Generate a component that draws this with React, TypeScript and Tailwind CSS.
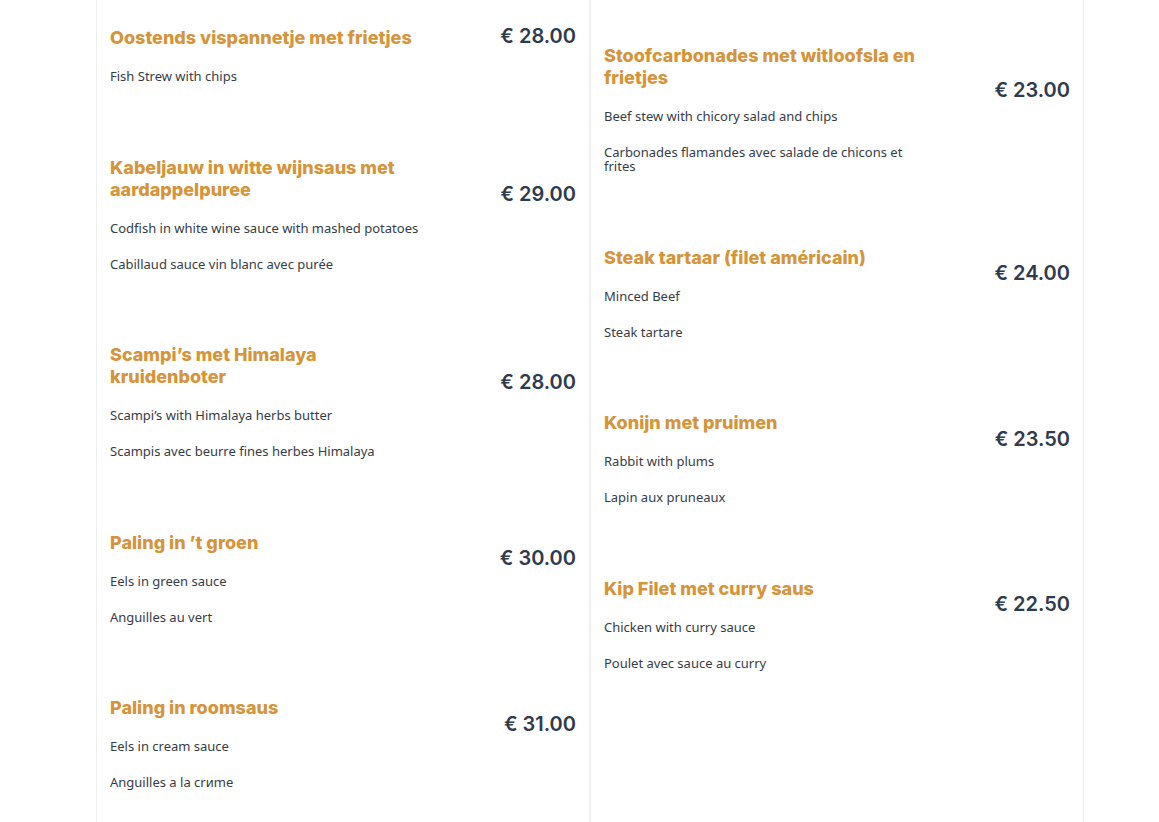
import React from 'react'

type Dish = { name: string; en: string; fr?: string; price: string }

const leftDishes: Dish[] = [
  { name: 'Oostends vispannetje met frietjes', en: 'Fish Strew with chips', price: '€ 28.00' },
  {
    name: 'Kabeljauw in witte wijnsaus met aardappelpuree',
    en: 'Codfish in white wine sauce with mashed potatoes',
    fr: 'Cabillaud sauce vin blanc avec purée',
    price: '€ 29.00',
  },
  {
    name: 'Scampi’s met Himalaya kruidenboter',
    en: 'Scampi’s with Himalaya herbs butter',
    fr: 'Scampis avec beurre fines herbes Himalaya',
    price: '€ 28.00',
  },
  { name: 'Paling in ’t groen', en: 'Eels in green sauce', fr: 'Anguilles au vert', price: '€ 30.00' },
  { name: 'Paling in roomsaus', en: 'Eels in cream sauce', fr: 'Anguilles a la crиme', price: '€ 31.00' },
]

const rightDishes: Dish[] = [
  {
    name: 'Stoofcarbonades met witloofsla en frietjes',
    en: 'Beef stew with chicory salad and chips',
    fr: 'Carbonades flamandes avec salade de chicons et frites',
    price: '€ 23.00',
  },
  { name: 'Steak tartaar (filet américain)', en: 'Minced Beef', fr: 'Steak tartare', price: '€ 24.00' },
  { name: 'Konijn met pruimen', en: 'Rabbit with plums', fr: 'Lapin aux pruneaux', price: '€ 23.50' },
  { name: 'Kip Filet met curry saus', en: 'Chicken with curry sauce', fr: 'Poulet avec sauce au curry', price: '€ 22.50' },
]

function DishRow({ dish }: { dish: Dish }) {
  return (
    <div className="flex items-center justify-between mb-[73.5px]">
      <div className="w-[318px]">
        <h3 className="font-['Inter',sans-serif] font-extrabold text-[18px] leading-[22px] text-[#d6943a]">
          {dish.name}
        </h3>
        <p className="mt-[20px] font-['Noto_Sans',sans-serif] text-[13px] leading-[14px] text-[#363c47]">{dish.en}</p>
        {dish.fr && (
          <p className="mt-[22px] font-['Noto_Sans',sans-serif] text-[13px] leading-[14px] text-[#363c47]">{dish.fr}</p>
        )}
      </div>
      {/* prijs staat iets boven het midden van het blok */}
      <div className="-mt-[39px] font-['Inter',sans-serif] font-semibold text-[20px] leading-[28px] text-[#2f3a4d]">
        {dish.price}
      </div>
    </div>
  )
}

export default function App() {
  return (
    <div className="h-screen overflow-hidden bg-white">
      <div className="ml-[96px] w-[988px] grid grid-cols-2 h-full">
        <div className="border-x border-[#efefef] px-[13px] pt-[27px]">
          {leftDishes.map(d => (
            <DishRow key={d.name} dish={d} />
          ))}
        </div>
        <div className="border-x border-[#efefef] px-[13px] pt-[45px]">
          {rightDishes.map(d => (
            <DishRow key={d.name} dish={d} />
          ))}
        </div>
      </div>
    </div>
  )
}
